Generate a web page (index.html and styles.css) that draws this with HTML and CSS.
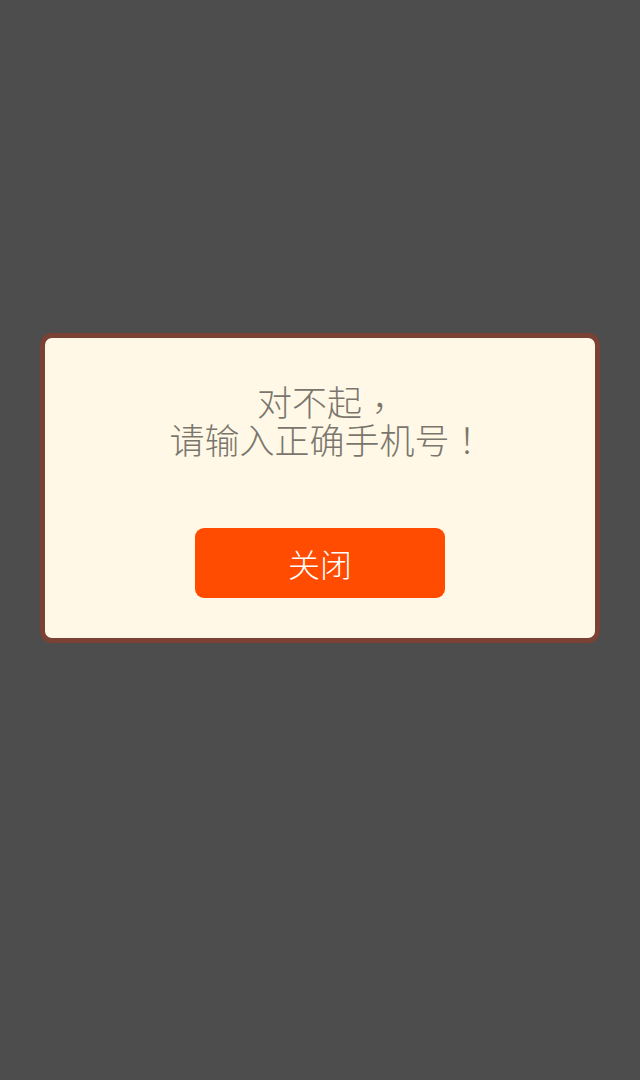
FILE: index.html
```html
<!DOCTYPE html>
<html lang="zh-CN">
<head>
<meta charset="utf-8">
<link rel="stylesheet" href="styles.css">
</head>
<body>
<div class="dialog">
  <p class="message">对不起<span class="fw comma">，</span><br>请输入正确手机号<span class="fw">！</span></p>
  <button class="close-btn">关闭</button>
</div>
</body>
</html>
```
FILE: styles.css
```css
html, body {
  margin: 0;
  padding: 0;
}
body {
  background: #4d4d4d;
  height: 1080px;
  font-family: "Noto Sans CJK SC", sans-serif;
  padding-top: 333px;
  box-sizing: border-box;
}
.dialog {
  margin: 0 40px;
  background: #fff8e6;
  border: 5px solid #7b4135;
  border-radius: 12px;
  padding: 44px 0 40px;
  display: flex;
  flex-direction: column;
  align-items: center;
}
.message {
  margin: 0;
  padding-left: 14px;
  font-size: 35px;
  font-weight: 300;
  line-height: 38px;
  color: #7b766d;
  text-align: center;
}
.fw {
  display: inline-block;
  width: 1em;
  text-align: center;
  font-family: "Noto Sans CJK TC", "Noto Sans CJK SC", sans-serif;
}
.comma {
  transform: translateY(5px);
}
.close-btn {
  margin-top: 70px;
  width: 250px;
  height: 70px;
  border: none;
  border-radius: 9px;
  background: #ff4c00;
  color: #ffffff;
  font-family: "Noto Sans CJK SC", sans-serif;
  font-size: 32px;
  font-weight: 300;
  padding: 0;
}
```
